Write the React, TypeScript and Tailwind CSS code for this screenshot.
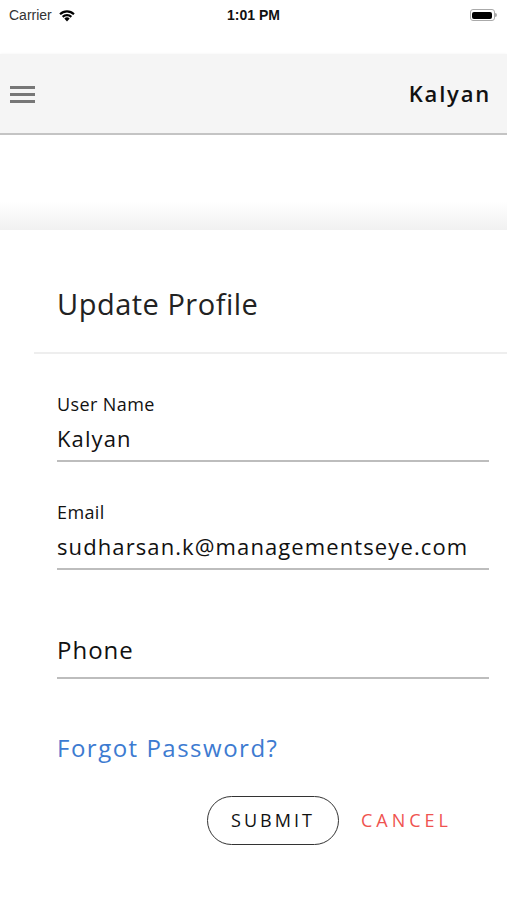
import React from "react";

const font = { fontFamily: "'Open Sans', 'Noto Sans', sans-serif" };

function StatusBar() {
  return (
    <div className="h-[30px] flex items-center justify-between px-[9px] text-[14px] text-black" style={{ fontFamily: "'Liberation Sans', sans-serif" }}>
      <div className="flex items-center gap-[6px] w-[120px]">
        <span className="text-[#333]">Carrier</span>
        <svg width="18" height="13" viewBox="0 0 18 13">
          <path d="M9 12.5 L6.3 9.6 A4 4 0 0 1 11.7 9.6 Z" fill="#000" />
          <path d="M3.9 7.1 A7.4 7.4 0 0 1 14.1 7.1 L12.6 8.7 A5.3 5.3 0 0 0 5.4 8.7 Z" fill="#000" />
          <path d="M1.3 4.4 A11 11 0 0 1 16.7 4.4 L15.2 6 A8.9 8.9 0 0 0 2.8 6 Z" fill="#000" />
        </svg>
      </div>
      <span className="font-bold text-[#111]">1:01 PM</span>
      <div className="w-[120px] flex justify-end pr-[1px]">
        <div className="flex items-center">
          <div className="w-[25px] h-[12px] rounded-[3px] border border-[#aaa] p-[1.5px]">
            <div className="w-full h-full bg-black rounded-[2px]" />
          </div>
          <div className="w-[2px] h-[4px] bg-[#aaa] rounded-r-sm" />
        </div>
      </div>
    </div>
  );
}

function Field({ label, value }: { label: string; value: string }) {
  return (
    <div className="border-b-2 border-[#bdbdbd]">
      <div className="text-[18px] leading-[20px] text-[#111] tracking-[0.4px]">{label}</div>
      <div className="text-[22px] leading-[26px] text-[#111] mt-[11px] pb-[9px] tracking-[1.1px]">{value}</div>
    </div>
  );
}

export default function App() {
  return (
    <div className="w-[507px] h-[900px] bg-white overflow-hidden" style={font}>
      <StatusBar />
      <div className="h-[24px]" />
      <div className="h-[81px] bg-[#f5f5f5] flex items-center justify-between pl-[10px] pr-[16px] border-b-2 border-[#c4c4c4] shadow-sm">
        <div className="flex flex-col gap-[4px] w-[25px] mt-[2px]">
          <div className="h-[3px] bg-[#777]" />
          <div className="h-[3px] bg-[#777]" />
          <div className="h-[3px] bg-[#777]" />
        </div>
        <span className="text-[22px] font-semibold text-[#111] tracking-[1.8px]">Kalyan</span>
      </div>
      <div className="h-[95px] bg-gradient-to-b from-white from-70% to-[#f1f1f1]" />
      <div className="ml-[8px] bg-white">
        <div className="pl-[23px] pt-[56px] pb-[30px] ml-[26px] border-b-2 border-[#eeeeee]">
          <div className="text-[29px] leading-[36px] text-[#222] tracking-[0.5px]">Update Profile</div>
        </div>
        <div className="pl-[49px] pr-[18px] pt-[40px] flex flex-col gap-[40px]">
          <Field label="User Name" value="Kalyan" />
          <Field label="Email" value="sudharsan.k@managementseye.com" />
          <div className="border-b-2 border-[#bdbdbd] pt-[25px] pb-[12px]">
            <div className="text-[24px] leading-[30px] text-[#111] tracking-[1px]">Phone</div>
          </div>
        </div>
        <div className="pl-[49px] pt-[54px] text-[24px] leading-[30px] text-[#3d7bd1] tracking-[1.5px]">Forgot Password?</div>
        <div className="flex items-center pl-[199px] pt-[33px] gap-[22px]">
          <button className="w-[132px] h-[49px] rounded-full border-[1.5px] border-[#333] text-[18px] tracking-[3px] text-[#111] font-medium">SUBMIT</button>
          <button className="text-[18px] tracking-[4px] text-[#ef5350] font-medium">CANCEL</button>
        </div>
      </div>
    </div>
  );
}
